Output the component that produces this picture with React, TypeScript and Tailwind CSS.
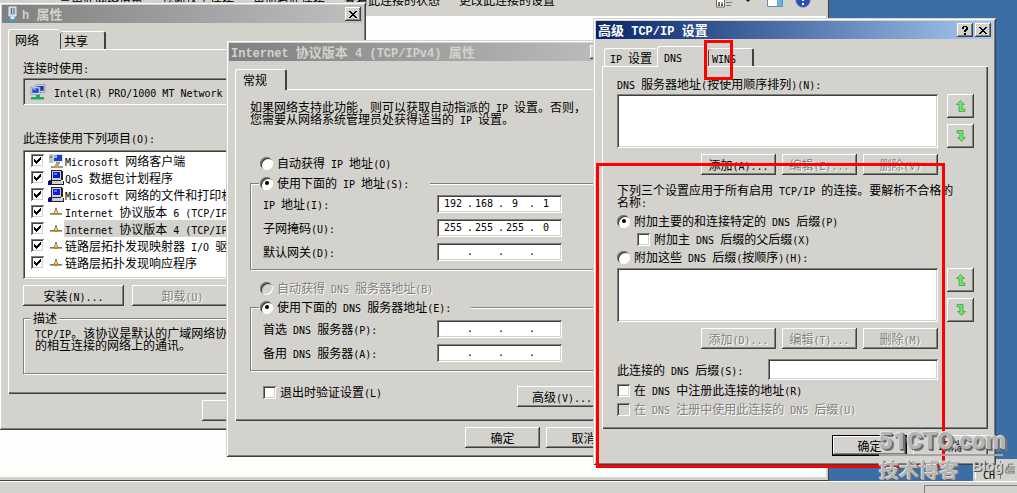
import type { ReactNode } from 'react'

const raised = 'bg-[#d3d2cd] shadow-[inset_-1px_-1px_0_#404040,inset_1px_1px_0_#fff,inset_-2px_-2px_0_#808080]'
const sunken = 'bg-white shadow-[inset_1px_1px_0_#808080,inset_-1px_-1px_0_#fff,inset_2px_2px_0_#404040,inset_-2px_-2px_0_#d3d2cd]'
const grayed = 'text-[#808080] [text-shadow:1px_1px_0_#fff]'

const commands = ['禁用此网络设备', '诊断这个连接', '重命名此连接', '查看此连接的状态', '更改此连接的设置']

const items = [
  { label: 'Microsoft 网络客户端', icon: 'client' },
  { label: 'QoS 数据包计划程序', icon: 'pc' },
  { label: 'Microsoft 网络的文件和打印机共享', icon: 'pc' },
  { label: 'Internet 协议版本 6 (TCP/IPv6)', icon: 'net' },
  { label: 'Internet 协议版本 4 (TCP/IPv4)', icon: 'net', active: true },
  { label: '链路层拓扑发现映射器 I/O 驱动程序', icon: 'net' },
  { label: '链路层拓扑发现响应程序', icon: 'net' },
]

// Latin runs are half the width of a CJK character
function T({ children }: { children: string }) {
  return (
    <>
      {children.split(/([\x20-\x7e]+)/).map((run, i) =>
        i % 2 ? (
          <span key={i} className="whitespace-pre font-['DejaVu_Sans_Mono',monospace] text-[10px] leading-[8px]">{run}</span>
        ) : run
      )}
    </>
  )
}

function TitleText({ children }: { children: string }) {
  return (
    <h2 className="flex-1 whitespace-nowrap text-[13px] leading-[18px] font-bold">
      {children.split(/([\x20-\x7e]+)/).map((run, i) =>
        i % 2 ? (
          <span key={i} className="whitespace-pre font-['Liberation_Mono',monospace] text-[12px] leading-3">{run}</span>
        ) : run
      )}
    </h2>
  )
}

function CaptionButton({ kind }: { kind: 'help' | 'close' }) {
  return (
    <button aria-label={kind} className={`${raised} flex h-[14px] w-4 items-center justify-center`}>
      {kind === 'close' ? (
        <svg width="8" height="7" viewBox="0 0 8 7" shapeRendering="crispEdges">
          <path d="M0 0h2v1h1v1h2V1h1V0h2v1H7v1H6v1H5v1h1v1h1v1h1v1H6V6H5V5H3v1H2v1H0V6h1V5h1V4h1V3H2V2H1V1H0z" />
        </svg>
      ) : (
        <svg width="6" height="9" viewBox="0 0 6 9" shapeRendering="crispEdges">
          <path d="M1 0h4v1h1v3H5v1H4v1H2V4h1V3h1V1H2v2H0V1h1zM2 7h2v2H2z" />
        </svg>
      )}
    </button>
  )
}

type DialogProps = { title: string; className: string; active?: boolean; help?: boolean; icon?: ReactNode; children: ReactNode }

function Dialog({ title, className, active, help, icon, children }: DialogProps) {
  return (
    <section
      aria-label={title}
      className={`absolute bg-[#d3d2cd] p-[3px] shadow-[inset_1px_1px_0_#d3d2cd,inset_-1px_-1px_0_#404040,inset_2px_2px_0_#fff,inset_-2px_-2px_0_#808080] ${className}`}
    >
      <header
        className={`flex h-[18px] items-center gap-[2px] bg-linear-to-r px-[2px] ${
          active ? 'from-[#0a246a] to-[#a6caf0] text-white' : 'from-[#808080] to-[#c0c0c0] text-[#d3d2cd]'
        }`}
      >
        {icon}
        <TitleText>{title}</TitleText>
        {help && <CaptionButton kind="help" />}
        <CaptionButton kind="close" />
      </header>
      <div className="pr-[5px] pb-[6px] pl-[6px]">{children}</div>
    </section>
  )
}

function Tab({ children, selected, className }: { children: string; selected?: boolean; className: string }) {
  return (
    <button
      role="tab"
      aria-selected={!!selected}
      className={`relative rounded-t-[3px] border-t border-white bg-[#d3d2cd] text-left whitespace-nowrap ${
        selected ? '-mb-px h-[21px] border-l' : 'h-[18px]'
      } ${className}`}
    >
      <T>{children}</T>
    </button>
  )
}

function Panel({ children, className }: { children: ReactNode; className: string }) {
  return (
    <div className={`pr-[14px] pl-[15px] shadow-[inset_1px_1px_0_#fff,inset_-1px_-1px_0_#404040,inset_-2px_-2px_0_#808080] ${className}`}>
      {children}
    </div>
  )
}

function Button({ children, className = 'w-[75px]', disabled }: { children: string; className?: string; disabled?: boolean }) {
  return (
    <button disabled={disabled} className={`${raised} h-[21px] shrink-0 whitespace-nowrap ${disabled ? grayed : ''} ${className}`}>
      <T>{children}</T>
    </button>
  )
}

function CheckBox({ checked, disabled, label }: { checked?: boolean; disabled?: boolean; label?: string }) {
  return (
    <span className="grid size-[13px] shrink-0 place-items-center">
      <input
        type="checkbox"
        aria-label={label}
        defaultChecked={checked}
        disabled={disabled}
        className={`${sunken} col-start-1 row-start-1 size-[13px] appearance-none disabled:bg-[#d3d2cd]`}
      />
      {checked && (
        <svg className="pointer-events-none relative col-start-1 row-start-1" width="7" height="7" viewBox="0 0 7 7" shapeRendering="crispEdges">
          <path d="M0 2h1v1h1v1h1V3h1V2h1V1h1V0h1v3H6v1H5v1H4v1H3v1H2V6H1V5H0z" />
        </svg>
      )}
    </span>
  )
}

type ChoiceProps = { type: 'radio' | 'checkbox'; name?: string; checked?: boolean; disabled?: boolean; className?: string; children: string }

function Choice({ type, name, checked, disabled, className = '', children }: ChoiceProps) {
  return (
    <label className={`flex h-3 items-center gap-1 whitespace-nowrap ${disabled ? grayed : ''} ${className}`}>
      {type === 'checkbox' ? (
        <CheckBox checked={checked} disabled={disabled} />
      ) : (
        <input
          type="radio"
          name={name}
          defaultChecked={checked}
          disabled={disabled}
          className="grid size-[13px] shrink-0 appearance-none place-items-center rounded-full bg-white shadow-[inset_1px_1px_0_#808080,inset_-1px_-1px_0_#fff,inset_2px_2px_0_#404040] checked:before:size-1 checked:before:rounded-full checked:before:bg-black checked:before:content-[''] disabled:bg-[#d3d2cd]"
        />
      )}
      <span><T>{children}</T></span>
    </label>
  )
}

function IpField({ label, octets = ['', '', '', ''] }: { label: string; octets?: string[] }) {
  return (
    <div className="flex h-[18px] items-center">
      <span className="w-[174px]"><T>{label}</T></span>
      <div role="group" aria-label={label} className={`${sunken} flex h-[18px] w-[125px] items-center px-[2px] font-['DejaVu_Sans_Mono',monospace] text-[10px]`}>
        {octets.map((octet, i) => (
          <span key={i} className="flex">
            <input aria-label={`${label} ${i + 1}`} defaultValue={octet} className="w-7 bg-transparent text-center outline-none" />
            {i < 3 && <span className="w-[3px]">.</span>}
          </span>
        ))}
      </div>
    </div>
  )
}

function Group({ legend, className, children }: { legend: ReactNode; className: string; children: ReactNode }) {
  return (
    <fieldset className={`border border-[#808080] shadow-[1px_1px_0_#fff,inset_1px_1px_0_#fff] ${className}`}>
      {legend}
      {children}
    </fieldset>
  )
}

function ArrowButton({ down }: { down?: boolean }) {
  return (
    <button aria-label={down ? '下移' : '上移'} className={`${raised} flex h-6 w-[27px] items-center justify-center`}>
      <svg width="10" height="12" viewBox="0 0 10 12" className={down ? 'rotate-180' : ''}>
        <path d="M4.5.5 8.5 4.500H6.200v4.500h2.800v2.500H3V4.500H.5z" fill="#66e866" stroke="#4d9e4d" strokeWidth=".8" />
      </svg>
    </button>
  )
}

function AddressList({ label }: { label: string }) {
  return (
    <div className="flex gap-[9px]">
      <div role="listbox" aria-label={label} className={`${sunken} h-[54px] flex-1`} />
      <div className="flex flex-col gap-[6px]">
        <ArrowButton />
        <ArrowButton down />
      </div>
    </div>
  )
}

function ItemIcon({ kind }: { kind: string }) {
  if (kind === 'net') {
    return (
      <svg width="16" height="16" viewBox="0 0 16 16" shapeRendering="crispEdges">
        <path d="M2 9h12v2H2z" fill="#a8a8a8" />
        <path d="M2 9h4v1H2zM10 9h4v1h-4z" fill="#777" />
        <path d="M7 4h2v3H7z" fill="#888" />
        <path d="M6 7h4v4H6z" fill="#c08a20" />
        <path d="M7 7h2v2H7z" fill="#f3d060" />
      </svg>
    )
  }
  if (kind === 'client') {
    return (
      <svg width="16" height="16" viewBox="0 0 16 16" shapeRendering="crispEdges">
        <path d="M1 1h4v9H1z" fill="#c5c5c0" />
        <path d="M2 3h2v2H2z" fill="#3c9e55" />
        <path d="M5 1h10v8H5z" fill="#cfd6e2" />
        <path d="M6 2h8v6H6z" fill="#1f3fbd" />
        <path d="M6 2h3v3H6z" fill="#8fb6f4" />
        <path d="M8 9h4v2H8zM3 13h12v2H3z" fill="#999" />
        <path d="M7 11h4v4H7z" fill="#d4a12c" />
      </svg>
    )
  }
  return (
    <svg width="16" height="16" viewBox="0 0 16 16" shapeRendering="crispEdges">
      <path d="M3 0h11v1h1v9h-2v1h3v4H1v-5h2z" fill="#222" />
      <path d="M4 1h9v9H4zM4 11h11v3H4z" fill="#d0d0d0" />
      <path d="M5 2h7v6H5z" fill="#0a1ce0" />
      <path d="M6 3h3v2H6z" fill="#5d7cff" />
      <path d="M0 11h4v4H0z" fill="#0a1080" />
    </svg>
  )
}

function AdapterIcon() {
  return (
    <svg width="16" height="16" viewBox="0 0 16 16" className="shrink-0">
      <path d="M6 .5h9v8H6z" fill="#c9d2e2" stroke="#8791a5" strokeWidth=".7" />
      <path d="M7.3 2h6.4v4.8H7.3z" fill="#1c37b4" />
      <path d="M1 3h9v7.5H1z" fill="#d5dcea" stroke="#8791a5" strokeWidth=".7" />
      <path d="M2.3 4.3h6.4v4.6H2.3z" fill="#2047c9" />
      <path d="M2.3 4.3h3v2.4z" fill="#9fc0ff" />
      <path d="M6 11h4v2h4v2.5H1V13h5z" fill="#20a85a" />
    </svg>
  )
}

function PlugIcon() {
  return (
    <svg width="16" height="16" viewBox="0 0 16 16">
      <path d="M5 1h7v9H5z" fill="#b9c8d8" stroke="#e9f1f8" />
      <path d="M7 2h1v6H7zM9.500 2h1v6h-1z" fill="#4c6f90" />
      <path d="M6.500 10.500h4V13h-4z" fill="#e4edf4" />
      <path d="M5.500 13h6v2.500h-6z" fill="#35a8dc" />
    </svg>
  )
}

function Explorer() {
  return (
    <div className="flex w-[829px] flex-col border-r border-b border-[#404040] bg-[#d3d2cd] pr-[2px] pb-[3px]">
      <div className="flex h-4 items-start overflow-hidden">
        <div className="-mt-[6px] flex flex-1 gap-[19px] whitespace-nowrap pl-[59px]">
          {commands.map(c => <a key={c} href="#">{c}</a>)}
        </div>
        <svg width="100" height="10" viewBox="0 0 100 10" aria-hidden="true">
          <path d="M.5-2h8v9h-8z" fill="#fff" stroke="#667" />
          <path d="M2 2h2v2H2z" fill="#3b9e3b" />
          <path d="M5 2h2v2H5z" fill="#e09b2c" />
          <path d="M2 4h2v2H2z" fill="#c53434" />
          <path d="M5 4h2v2H5z" fill="#2c50c5" />
          <path d="M10 2h6v1h-6zM10 5h5v1h-5z" fill="#6b7b8c" />
          <path d="M30 0h4l-2 2z" fill="#111" />
          <path d="M51.500-5h15V6.500h-15z" fill="#fff" stroke="#5a8fbe" />
          <path d="M61-5h5V6h-5z" fill="#63b6dd" />
          <circle cx="87" cy="0" r="7.500" fill="#2c4fb5" stroke="#a9b0c0" />
          <path d="M86 3h2v2h-2zM86-2h2v3h-2z" fill="#fff" />
        </svg>
        <span className="w-[10px]" />
      </div>
      <div className="flex-1 bg-[#fcfefc]" />
    </div>
  )
}

function ConnectionDialog() {
  return (
    <Dialog title="h 属性" icon={<PlugIcon />} className="top-[2px] -left-px w-[367px]">
      <div role="tablist" className="mt-[6px] flex items-end">
        <Tab selected className="w-[52px] pl-[6px]">网络</Tab>
        <Tab className="w-[46px] border-r-2 border-r-[#404040] pl-1 shadow-[inset_1px_0_0_#404040]">共享</Tab>
      </div>
      <Panel className="pt-[13px] pb-5">
        <p><T>连接时使用:</T></p>
        <div className="mt-1 flex h-[27px] items-center gap-2 pl-[7px] whitespace-nowrap shadow-[inset_1px_1px_0_#808080,inset_-1px_-1px_0_#fff,inset_2px_2px_0_#404040]">
          <AdapterIcon />
          <span><T>Intel(R) PRO/1000 MT Network</T></span>
        </div>
        <p className="mt-[27px]"><T>此连接使用下列项目(O):</T></p>
        <ul className={`${sunken} mt-[6px] h-[129px] overflow-hidden py-[2px] pl-2`}>
          {items.map(item => (
            <li key={item.label} className="flex h-[17px] items-center whitespace-nowrap">
              <CheckBox checked label={item.label} />
              <span className="ml-1"><ItemIcon kind={item.icon} /></span>
              <span className={`px-px leading-[17px] ${item.active ? 'bg-[#d3d2cd]' : ''}`}><T>{item.label}</T></span>
            </li>
          ))}
        </ul>
        <div className="mt-[6px] flex gap-2">
          <Button className="w-[101px]">安装(N)...</Button>
          <Button className="w-[101px]" disabled>卸载(U)</Button>
        </div>
        <Group legend={<legend className="ml-[7px] bg-[#d3d2cd] px-[2px]">描述</legend>} className="mt-[6px] h-[62px]">
          <p className="pt-[3px] pl-[11px] whitespace-nowrap">
            <T>TCP/IP。该协议是默认的广域网络协议</T>
            <br />
            的相互连接的网络上的通讯。
          </p>
        </Group>
      </Panel>
      <div className="mt-[6px] flex justify-end">
        <button aria-label="确定" className={`${raised} h-[21px] w-[156px]`} />
      </div>
    </Dialog>
  )
}

function Ipv4Dialog() {
  return (
    <Dialog title="Internet 协议版本 4 (TCP/IPv4) 属性" help className="top-10 left-[226px] w-[403px]">
      <div role="tablist" className="mt-2 flex items-end">
        <Tab selected className="w-[52px] border-r-2 border-r-[#404040] pl-[7px]">常规</Tab>
      </div>
      <Panel className="pt-[12px] pb-[14px]">
        <p className="whitespace-nowrap">
          <T>如果网络支持此功能，则可以获取自动指派的 IP 设置。否则，</T>
          <br />
          <T>您需要从网络系统管理员处获得适当的 IP 设置。</T>
        </p>
        <Choice type="radio" name="ip" className="mt-8 ml-[10px]">自动获得 IP 地址(O)</Choice>
        <Group
          legend={
            <legend className="ml-2 w-[171px] bg-[#d3d2cd] pl-px">
              <Choice type="radio" name="ip" checked>使用下面的 IP 地址(S):</Choice>
            </legend>
          }
          className="mt-2"
        >
          <div className="flex flex-col gap-[6px] pt-[6px] pb-2 pl-3">
            <IpField label="IP 地址(I):" octets={['192', '168', '9', '1']} />
            <IpField label="子网掩码(U):" octets={['255', '255', '255', '0']} />
            <IpField label="默认网关(D):" />
          </div>
        </Group>
        <Choice type="radio" name="dns" disabled className="mt-3 ml-[10px]">自动获得 DNS 服务器地址(B)</Choice>
        <Group
          legend={
            <legend className="ml-2 w-[212px] bg-[#d3d2cd] pl-px">
              <Choice type="radio" name="dns" checked>使用下面的 DNS 服务器地址(E):</Choice>
            </legend>
          }
          className="mt-[7px]"
        >
          <div className="flex flex-col gap-[6px] pt-[7px] pb-2 pl-3">
            <IpField label="首选 DNS 服务器(P):" />
            <IpField label="备用 DNS 服务器(A):" />
          </div>
        </Group>
        <div className="mt-[15px] flex items-start justify-between pl-[13px]">
          <Choice type="checkbox">退出时验证设置(L)</Choice>
          <Button className="w-[90px]">高级(V)...</Button>
        </div>
      </Panel>
      <div className="mt-[6px] flex justify-end gap-[6px]">
        <Button>确定</Button>
        <Button>取消</Button>
      </div>
    </Dialog>
  )
}

function AdvancedDialog() {
  return (
    <Dialog title="高级 TCP/IP 设置" active help className="top-[18px] left-[593px] w-[403px]">
      <div role="tablist" className="mt-[7px] flex items-end pl-[2px]">
        <Tab className="w-[53px] border-l pl-[5px]">IP 设置</Tab>
        <Tab selected className="w-[51px] pl-[6px]">DNS</Tab>
        <Tab className="w-[46px] border-r-2 border-r-[#404040] pl-1 shadow-[inset_1px_0_0_#404040]">WINS</Tab>
      </div>
      <Panel className="pt-3 pb-[14px]">
        <p className="mb-1"><T>DNS 服务器地址(按使用顺序排列)(N):</T></p>
        <AddressList label="DNS 服务器地址" />
        <div className="mt-[6px] flex justify-end gap-[6px] pr-9">
          <Button>添加(A)...</Button>
          <Button disabled>编辑(E)...</Button>
          <Button disabled>删除(V)</Button>
        </div>
        <p className="mt-[9px] whitespace-nowrap">
          <T>下列三个设置应用于所有启用 TCP/IP 的连接。要解析不合格的</T>
          <br />
          <T>名称:</T>
        </p>
        <Choice type="radio" name="suffix" checked className="mt-[7px]">附加主要的和连接特定的 DNS 后缀(P)</Choice>
        <Choice type="checkbox" className="mt-[6px] ml-5">附加主 DNS 后缀的父后缀(X)</Choice>
        <Choice type="radio" name="suffix" className="mt-[6px] mb-[5px]">附加这些 DNS 后缀(按顺序)(H):</Choice>
        <AddressList label="DNS 后缀" />
        <div className="mt-[6px] flex justify-end gap-[6px] pr-9">
          <Button disabled>添加(D)...</Button>
          <Button disabled>编辑(T)...</Button>
          <Button disabled>删除(M)</Button>
        </div>
        <div className="mt-[10px] flex items-center pr-9">
          <label htmlFor="suffix" className="w-[151px]"><T>此连接的 DNS 后缀(S):</T></label>
          <input id="suffix" type="text" className={`${sunken} h-[21px] w-0 flex-1 px-1 outline-none`} />
        </div>
        <Choice type="checkbox" className="mt-1">在 DNS 中注册此连接的地址(R)</Choice>
        <Choice type="checkbox" disabled className="mt-[7px]">在 DNS 注册中使用此连接的 DNS 后缀(U)</Choice>
      </Panel>
      <div className="mt-[6px] flex justify-end gap-[6px]">
        <Button className="w-[75px] border border-black">确定</Button>
        <Button>取消</Button>
      </div>
    </Dialog>
  )
}

function Watermark() {
  return (
    <div className="pointer-events-none absolute top-[427px] left-[879px] w-[124px] font-bold whitespace-nowrap text-[#b4b4b4]">
      <div className="h-[29px] border-b-2 border-[#a4a4a4] font-['Roboto',sans-serif] text-[24px] leading-[28px] font-black [text-shadow:-1px_-1px_0_#e4e4e4,1px_1px_0_#666,2px_2px_0_#777]">51CTO.com</div>
      <div className="flex items-start justify-between pt-1">
        <span className="text-[20px] leading-5 [text-shadow:-1px_-1px_0_#e4e4e4,1px_1px_0_#666]">技术博客</span>
        <span className="font-['Liberation_Sans',sans-serif] text-[14px] leading-3 text-[#d0d0d0] [text-shadow:1px_1px_0_#555]">Blog</span>
      </div>
    </div>
  )
}

export default function App() {
  return (
    <div className="relative flex min-h-screen flex-col overflow-hidden bg-[#3a6ea5] font-['Noto_Sans_CJK_SC',sans-serif] text-[12px] leading-[12px] text-black">
      <main className="flex flex-1">
        <Explorer />
        <div className="ml-auto flex h-[22px] w-11 self-end bg-[#d3d2cd] p-[2px]">
          <div className="w-[29px] border-r border-[#808080] pt-[7px] pl-2 shadow-[inset_1px_0_0_#fff]"><T>CH</T></div>
          <svg width="12" height="18" viewBox="0 0 12 18" className="ml-1">
            <path d="M2 9V5.500h2V2h6M3.500 5.500H14M1 12.500V8h13v4.500zM3 10.500h9" fill="none" stroke="#666" />
          </svg>
        </div>
      </main>
      <footer className="flex h-3 border-t border-white bg-[#d3d2cd] pt-[3px]">
        <div className="ml-auto h-4 w-[93px] border-t border-l border-[#808080]" />
      </footer>

      <ConnectionDialog />
      <Ipv4Dialog />
      <AdvancedDialog />

      {/* Highlighted areas */}
      <div className="pointer-events-none absolute top-10 left-[704px] h-10 w-[29px] border-3 border-[#ff0000]" />
      <div className="pointer-events-none absolute top-[163px] left-[596px] h-[305px] w-[349px] border-3 border-[#ff0000]" />
      <Watermark />
    </div>
  )
}
